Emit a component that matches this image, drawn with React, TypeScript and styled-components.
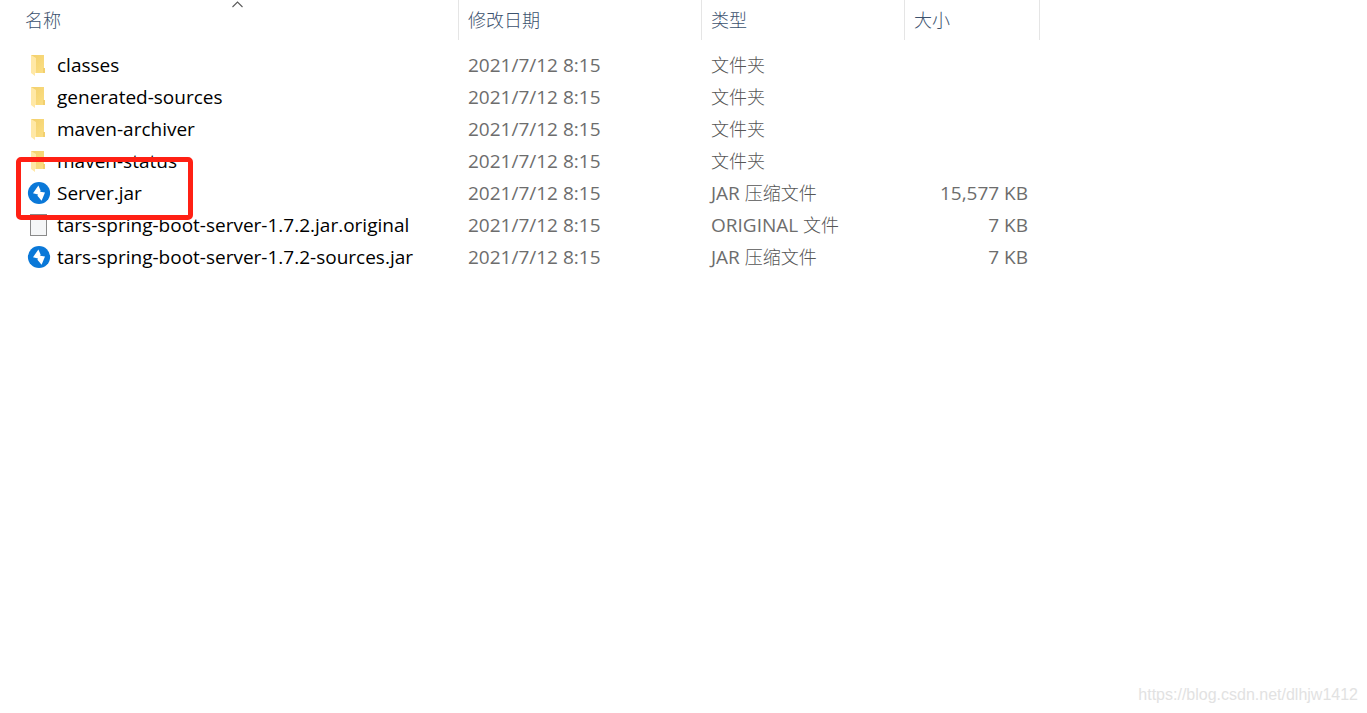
import React from "react";
import styled, { createGlobalStyle } from "styled-components";

const GlobalStyle = createGlobalStyle`
  *, *::before, *::after { box-sizing: border-box; }
  body {
    margin: 0;
    background: #ffffff;
    font-family: "Open Sans", "Noto Sans CJK SC", sans-serif;
  }
`;

const Page = styled.div`
  display: flex;
  flex-direction: column;
  min-height: 100vh;
`;

const Main = styled.main`
  flex: 1;
`;

const FileTable = styled.table`
  width: 100%;
  table-layout: fixed;
  border-collapse: separate;
  border-spacing: 0;
  tbody::before {
    content: "";
    display: block;
    height: 9px;
  }
`;

const Column = styled.col<{ $width?: number }>`
  width: ${(p) => (p.$width ? `${p.$width}px` : "auto")};
`;

const HeaderCell = styled.th<{ $first?: boolean }>`
  position: relative;
  height: 40px;
  padding: 0 0 0 ${(p) => (p.$first ? 25 : 9)}px;
  border-right: 1px solid #e5e5e5;
  text-align: left;
  vertical-align: top;
  font-weight: 400;
`;

const SortButton = styled.button`
  display: block;
  width: 100%;
  padding: 0;
  border: 0;
  background: none;
  color: #3c526e;
  font-family: "Noto Sans CJK SC", sans-serif;
  font-size: 18px;
  font-weight: 300;
  line-height: 38px;
  text-align: left;
`;

const SortMark = styled.svg`
  position: absolute;
  top: 0;
  left: 231px;
`;

const Cell = styled.td<{ $align?: "right" }>`
  height: 32px;
  padding: 0 ${(p) => (p.$align ? 12 : 0)}px 0 9px;
  color: #6d6d6d;
  font-size: 19px;
  line-height: 28px;
  white-space: nowrap;
  text-align: ${(p) => p.$align || "left"};
`;

const NameCell = styled(Cell)`
  position: relative;
  padding: 0 0 0 27px;
  color: #000000;
`;

const NameLine = styled.div`
  display: flex;
  align-items: center;
  gap: 6px;
`;

const Hanzi = styled.span`
  color: #565656;
  font-family: "Noto Sans CJK SC", sans-serif;
  font-size: 18px;
  font-weight: 300;
  line-height: 24px;
`;

const Icon = styled.svg`
  display: block;
  flex: none;
`;

const Highlight = styled.div`
  position: absolute;
  top: -20px;
  left: 16px;
  width: 177px;
  height: 63px;
  border: 5px solid #ff2014;
  border-radius: 5px;
  pointer-events: none;
  z-index: 1;
`;

const Footer = styled.footer`
  padding: 0 9px 8px;
  text-align: right;
  color: #e2e2e2;
  font-family: "Liberation Sans", sans-serif;
  font-size: 16px;
  line-height: 20px;
`;

type Kind = "folder" | "jar" | "file";

const FileIcon = ({ kind }: { kind: Kind }) => {
  if (kind === "folder") {
    return (
      <Icon width="24" height="24" viewBox="0 0 24 24" aria-hidden="true">
        <defs>
          <linearGradient id="folderBack" x1="0" y1="0" x2="1" y2="1">
            <stop offset="0" stopColor="#f3d06c" />
            <stop offset="1" stopColor="#fbdf85" />
          </linearGradient>
        </defs>
        <path d="M4 2h13v13h1v5H6z" fill="url(#folderBack)" />
        <path d="M16 15h2v5h-2z" fill="#f2cf6e" />
        <path d="M4 2l5 3v15h-1v3L4 20z" fill="#ffe8a6" />
      </Icon>
    );
  }
  if (kind === "jar") {
    return (
      <Icon width="24" height="24" viewBox="0 0 24 24" aria-hidden="true">
        <circle cx="12" cy="12" r="11.1" fill="#0a78d8" />
        <path d="M11.4 4.4L6 12.2L11 13.6L10.4 14.8L14.6 19.8L18 11.6L13.2 10.8L13.6 9.6z" fill="#fff" />
      </Icon>
    );
  }
  return (
    <Icon width="24" height="24" viewBox="0 0 24 24" aria-hidden="true">
      <rect x="3.5" y="1.5" width="16" height="21" fill="#f5f6f7" stroke="#8a8a8a" />
    </Icon>
  );
};

interface Entry {
  name: string;
  kind: Kind;
  prefix?: string;
  type: string;
  size?: string;
  marked?: boolean;
}

const entries: Entry[] = [
  { name: "classes", kind: "folder", type: "文件夹" },
  { name: "generated-sources", kind: "folder", type: "文件夹" },
  { name: "maven-archiver", kind: "folder", type: "文件夹" },
  { name: "maven-status", kind: "folder", type: "文件夹" },
  { name: "Server.jar", kind: "jar", prefix: "JAR ", type: "压缩文件", size: "15,577 KB", marked: true },
  { name: "tars-spring-boot-server-1.7.2.jar.original", kind: "file", prefix: "ORIGINAL ", type: "文件", size: "7 KB" },
  { name: "tars-spring-boot-server-1.7.2-sources.jar", kind: "jar", prefix: "JAR ", type: "压缩文件", size: "7 KB" },
];

export default function App() {
  return (
    <Page>
      <GlobalStyle />
      <Main>
        <FileTable>
          <colgroup>
            <Column $width={459} />
            <Column $width={243} />
            <Column $width={203} />
            <Column $width={135} />
            <Column />
          </colgroup>
          <thead>
            <tr>
              <HeaderCell $first aria-sort="ascending">
                <SortMark width="13" height="9" viewBox="0 0 13 9" aria-hidden="true">
                  <path d="M1.5 7l5-5 5 5" fill="none" stroke="#5a5a5a" strokeWidth="1.1" />
                </SortMark>
                <SortButton type="button">名称</SortButton>
              </HeaderCell>
              <HeaderCell>
                <SortButton type="button">修改日期</SortButton>
              </HeaderCell>
              <HeaderCell>
                <SortButton type="button">类型</SortButton>
              </HeaderCell>
              <HeaderCell>
                <SortButton type="button">大小</SortButton>
              </HeaderCell>
            </tr>
          </thead>
          <tbody>
            {entries.map((e) => (
              <tr key={e.name}>
                <NameCell>
                  <NameLine>
                    <FileIcon kind={e.kind} />
                    {e.name}
                  </NameLine>
                  {e.marked && <Highlight />}
                </NameCell>
                <Cell>2021/7/12 8:15</Cell>
                <Cell>
                  {e.prefix}
                  <Hanzi>{e.type}</Hanzi>
                </Cell>
                <Cell $align="right">{e.size}</Cell>
              </tr>
            ))}
          </tbody>
        </FileTable>
      </Main>
      <Footer>https://blog.csdn.net/dlhjw1412</Footer>
    </Page>
  );
}
